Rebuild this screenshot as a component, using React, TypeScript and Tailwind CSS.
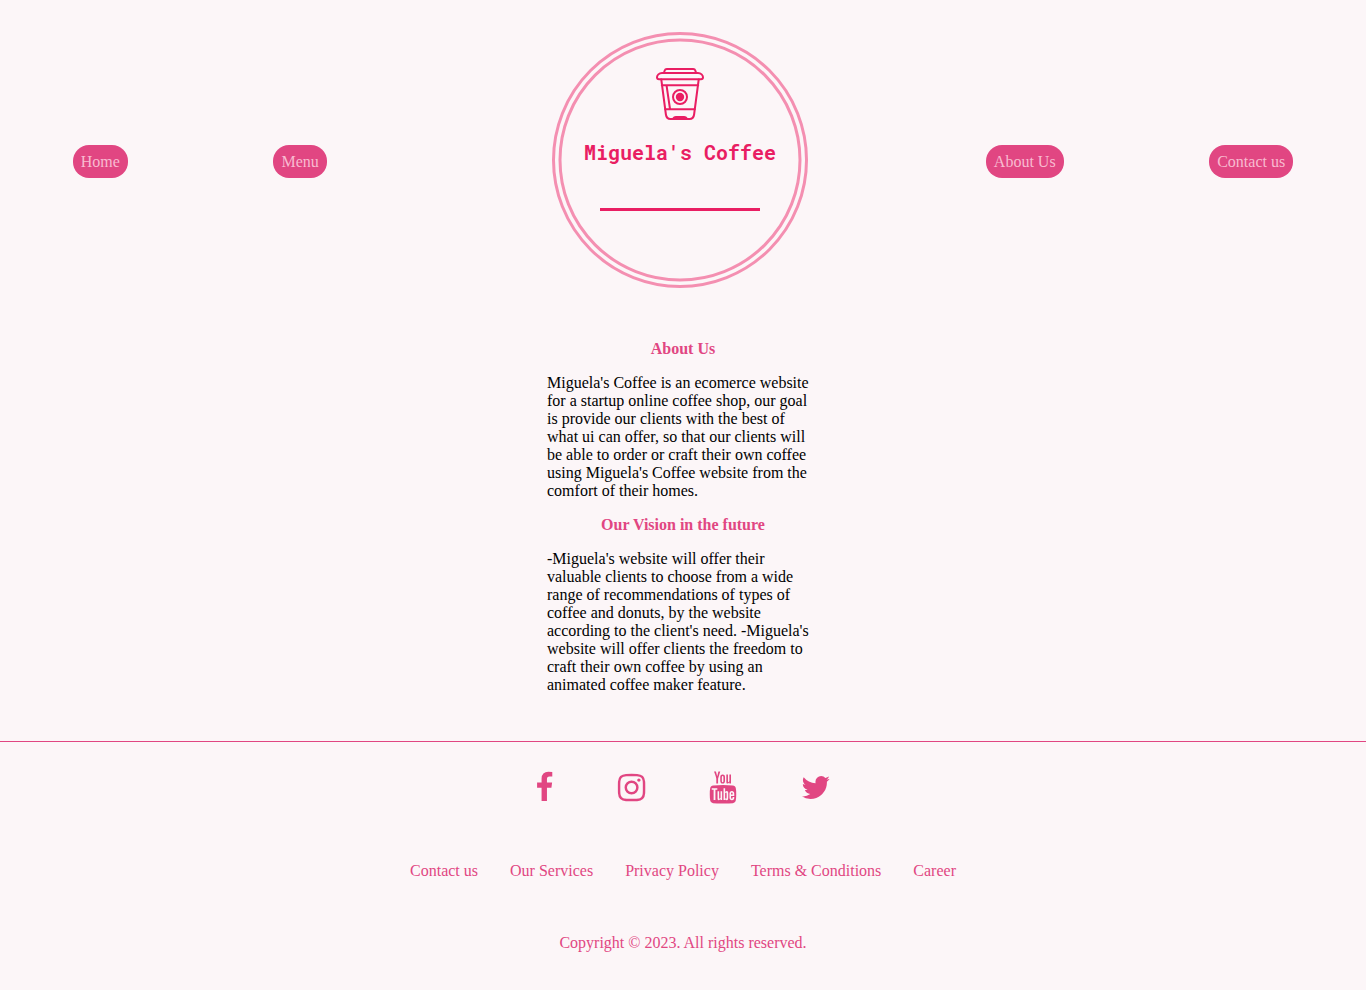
const navPill =
  "rounded-2xl bg-[#e14682] p-2 leading-[17px] text-[#f8bbd0] hover:bg-[#c93870]";

const footerLinks = [
  "Contact us",
  "Our Services",
  "Privacy Policy",
  "Terms & Conditions",
  "Career",
];

function Logo() {
  return (
    <svg
      viewBox="0 0 256 256"
      className="h-64 w-64"
      fill="none"
      role="img"
      aria-label="Miguela's Coffee"
    >
      <circle cx="128" cy="128" r="126.5" stroke="#f48fb1" strokeWidth="3" />
      <circle cx="128" cy="128" r="120" stroke="#f48fb1" strokeWidth="3" />
      <g stroke="#e91e63" strokeWidth="2" strokeLinejoin="round" strokeLinecap="round">
        <path d="M112 40.500 L112.700 38.500 Q113.200 37 114.800 37 H141.200 Q142.800 37 143.300 38.500 L144 40.500" />
        <path d="M110 41 H146 C149 41 151 43.200 151 45.300 C151 46.700 150.300 47.300 149 47.300 H107 C105.700 47.300 105 46.700 105 45.300 C105 43.200 107 41 110 41 Z" />
        <path d="M109.300 47.500 L113.900 82.500 Q114.500 87 118.500 87 H137.500 Q141.500 87 142.100 82.500 L146.700 47.500" />
        <path d="M109.800 53.200 H146.200 M113.300 77.200 H142.700 M114.500 53.200 L118 77" />
        <circle cx="128" cy="65" r="7" />
      </g>
      <circle cx="128" cy="65" r="4.200" fill="#e91e63" />
      <path d="M120 87 Q121 84 124 84 H132 Q135 84 136 87 Z" fill="#e91e63" />
      <text
        x="128"
        y="127.500"
        textAnchor="middle"
        fill="#e91e63"
        className="font-['Roboto_Mono','DejaVu_Sans_Mono',monospace] text-[20px] font-bold"
      >
        Miguela's Coffee
      </text>
      <path d="M48 177.500 H208" stroke="#e91e63" strokeWidth="3" />
    </svg>
  );
}

const socials = [
  {
    name: "Facebook",
    viewBox: "360 -28 1024 1792",
    size: "h-8 w-[18px]",
    path: "M1343 12v264h-157q-86 0-116 36t-30 108v189h293l-39 296h-254v759h-306v-759h-255v-296h255v-218q0-186 104-288.5t277-102.5q147 0 228 12z",
  },
  {
    name: "Instagram",
    viewBox: "96 -28 1536 1792",
    size: "h-8 w-7",
    path: "M1152 896q0-106-75-181t-181-75-181 75-75 181 75 181 181 75 181-75 75-181zm138 0q0 164-115 279t-279 115-279-115-115-279 115-279 279-115 279 115 115 279zm108-410q0 38-27 65t-65 27-65-27-27-65 27-65 65-27 65 27 27 65zm-502-220q-7 0-76.5-.5t-105.5 0-96.5 3-103 10-71.5 18.5q-50 20-88 58t-58 88q-11 29-18.5 71.5t-10 103-3 96.5 0 105.5.5 76.5-.5 76.5 0 105.5 3 96.5 10 103 18.5 71.5q20 50 58 88t88 58q29 11 71.5 18.5t103 10 96.5 3 105.5 0 76.5-.5 76.5.5 105.5 0 96.5-3 103-10 71.5-18.5q50-20 88-58t58-88q11-29 18.5-71.5t10-103 3-96.5 0-105.5-.5-76.5.5-76.5 0-105.5-3-96.5-10-103-18.5-71.5q-20-50-58-88t-88-58q-29-11-71.5-18.5t-103-10-96.5-3-105.5 0-76.5.5zm768 630q0 229-5 317-10 208-124 322t-322 124q-88 5-317 5t-317-5q-208-10-322-124t-124-322q-5-88-5-317t5-317q10-208 124-322t322-124q88-5 317-5t317 5q208 10 322 124t124 322q5 88 5 317z",
  },
  {
    name: "YouTube",
    viewBox: "0 -28 1536 1792",
    size: "h-8 w-7",
    path: "M971 1244v211q0 67-39 67-23 0-45-22v-301q22-22 45-22 39 0 39 67zm338 1v46h-90v-46q0-68 45-68t45 68zm-966-218h107v-94h-312v94h105v569h100v-569zm288 569h89v-494h-89v378q-30 42-57 42-18 0-21-21-1-3-1-35v-364h-89v391q0 49 8 73 12 37 58 37 48 0 102-61v54zm429-148v-197q0-73-9-99-17-56-71-56-50 0-93 54v-217h-89v663h89v-48q45 55 93 55 54 0 71-55 9-27 9-100zm338-10v-13h-91q0 51-2 61-7 36-40 36-46 0-46-69v-87h179v-103q0-79-27-116-39-51-106-51-68 0-107 51-28 37-28 116v173q0 79 29 116 39 51 108 51 72 0 108-53 18-27 21-54 2-9 2-58zm-608-913v-210q0-69-43-69t-43 69v210q0 70 43 70t43-70zm719 751q0 234-26 350-14 59-58 99t-102 46q-184 21-555 21t-555-21q-58-6-102.500-46t-57.500-99q-26-112-26-350 0-234 26-350 14-59 58-99t103-47q183-20 554-20t555 20q58 7 102.500 47t57.500 99q26 112 26 350zm-998-1276h102l-121 399v271h-100v-271q-14-74-61-212-37-103-65-187h106l71 263zm370 333v175q0 81-28 118-38 51-106 51-67 0-105-51-28-38-28-118v-175q0-80 28-117 38-51 105-51 68 0 106 51 28 37 28 117zm335-162v499h-91v-55q-53 62-103 62-46 0-59-37-8-24-8-75v-394h91v367q0 33 1 35 3 22 21 22 27 0 57-43v-381h91z",
  },
  {
    name: "Twitter",
    viewBox: "80 -28 1664 1792",
    size: "h-8 w-[30px]",
    path: "M1684 408q-67 98-162 167 1 14 1 42 0 130-38 259.5t-115.500 248.500-184.500 210.500-258 146-323 54.500q-271 0-492-145 35 4 78 4 225 0 401-138-105-2-188-64.500t-114-159.500q33 5 61 5 43 0 85-11-112-23-185.500-111.500t-73.500-205.500v-4q68 38 146 41-66-44-105-115t-39-154q0-88 44-163 121 149 294.500 238.500t371.500 99.500q-8-38-8-74 0-134 94.500-228.500t228.500-94.500q140 0 236 102 109-21 205-78-37 115-142 178 93-10 186-50z",
  },
];

export default function App() {
  return (
    <div className="min-h-screen bg-[#fcf6f8] font-['Liberation_Serif',serif] text-base leading-[18px] text-black">
      <header className="pt-8">
        <nav className="flex items-center justify-around" aria-label="Main">
          <a href="#home" className={navPill}>Home</a>
          <a href="#menu" className={navPill}>Menu</a>
          <a href="#home" className="block pr-8 pb-[2px] pl-20">
            <Logo />
          </a>
          <a href="#about" className={navPill}>About Us</a>
          <a href="#contact" className={navPill}>Contact us</a>
        </nav>
      </header>

      <main className="mx-auto flex w-[272px] flex-col gap-4 pt-[50px] pb-[47px]">
        <h1 className="text-center font-bold text-[#e14682]">About Us</h1>
        <p>
          Miguela's Coffee is an ecomerce website for a startup online coffee
          shop, our goal is provide our clients with the best of what ui can
          offer, so that our clients will be able to order or craft their own
          coffee using Miguela's Coffee website from the comfort of their homes.
        </p>
        <h2 className="text-center font-bold text-[#e14682]">
          Our Vision in the future
        </h2>
        <p>
          -Miguela's website will offer their valuable clients to choose from a
          wide range of recommendations of types of coffee and donuts, by the
          website according to the client's need. -Miguela's website will offer
          clients the freedom to craft their own coffee by using an animated
          coffee maker feature.
        </p>
      </main>

      <footer className="flex flex-col items-center border-t border-[#e14682] pt-[29px] pb-9 text-[#e14682]">
        <ul className="flex gap-16">
          {socials.map((s) => (
            <li key={s.name}>
              <a href={"#" + s.name.toLowerCase()} aria-label={s.name} className="block">
                <svg viewBox={s.viewBox} className={s.size + " overflow-visible"} fill="currentColor" aria-hidden="true">
                  <path d={s.path} />
                </svg>
              </a>
            </li>
          ))}
        </ul>
        <ul className="mt-[59px] flex flex-wrap justify-center gap-8">
          {footerLinks.map((label) => (
            <li key={label}>
              <a href="#footer" className="hover:underline">{label}</a>
            </li>
          ))}
        </ul>
        <p className="mt-[54px]">Copyright © 2023. All rights reserved.</p>
      </footer>
    </div>
  );
}
